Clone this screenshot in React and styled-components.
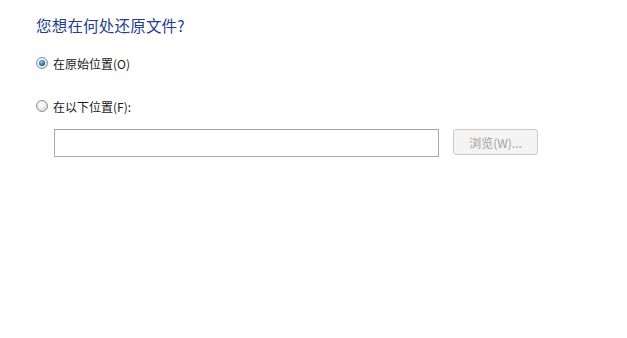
import React from "react";
import styled, { createGlobalStyle } from "styled-components";

const GlobalStyle = createGlobalStyle`
  html, body {
    margin: 0;
    padding: 0;
    background: #fff;
  }
  body {
    font-family: "Noto Sans CJK SC", "Liberation Sans", sans-serif;
    color: #1a1a1a;
  }
`;

const Page = styled.div`
  width: 627px;
  height: 338px;
  box-sizing: border-box;
  padding: 14px 0 0 36px;
  display: flex;
  flex-direction: column;
`;

const Title = styled.div`
  font-size: 15.5px;
  line-height: 22px;
  color: #1f3e8e;
  letter-spacing: 0.2px;
`;

const Option = styled.label`
  display: flex;
  align-items: center;
  gap: 5px;
  height: 18px;
  margin-top: ${(p) => p.$top}px;
  font-size: 12px;
  color: #1a1a1a;
`;

const Radio = styled.span`
  width: 12px;
  height: 12px;
  box-sizing: border-box;
  border-radius: 50%;
  border: 1px solid #8e8f8f;
  background: radial-gradient(circle at 40% 35%, #ffffff 0%, #e4e4e4 60%, #d0d0d0 100%);
  display: flex;
  align-items: center;
  justify-content: center;

  &::after {
    content: "";
    display: ${(p) => (p.$checked ? "block" : "none")};
    width: 6px;
    height: 6px;
    border-radius: 50%;
    background: radial-gradient(circle at 40% 35%, #7fd0f0 0%, #1d6fa0 60%, #0b3d63 100%);
  }
`;

const PathRow = styled.div`
  display: flex;
  align-items: flex-start;
  gap: 14px;
  margin: 14px 0 0 18px;
`;

const PathInput = styled.div`
  width: 385px;
  height: 28px;
  box-sizing: border-box;
  border: 1px solid #ababab;
  border-top-color: #a3a3a3;
  background: #fff;
`;

const BrowseButton = styled.div`
  width: 85px;
  height: 26px;
  box-sizing: border-box;
  border: 1px solid #cacaca;
  border-radius: 3px;
  background: #f4f4f4;
  color: #9f9f9f;
  font-size: 12px;
  display: flex;
  align-items: center;
  justify-content: center;
`;

export default function App() {
  return (
    <>
      <GlobalStyle />
      <Page>
        <Title>您想在何处还原文件?</Title>
        <Option $top={18}>
          <Radio $checked />
          在原始位置(O)
        </Option>
        <Option $top={25}>
          <Radio />
          在以下位置(F):
        </Option>
        <PathRow>
          <PathInput />
          <BrowseButton>浏览(W)...</BrowseButton>
        </PathRow>
      </Page>
    </>
  );
}
